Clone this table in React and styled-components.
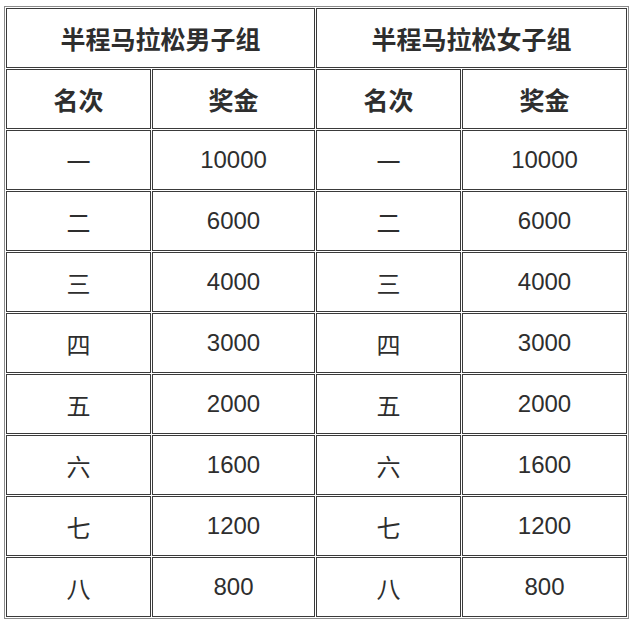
import styled, { createGlobalStyle } from 'styled-components';

const GlobalStyle = createGlobalStyle`
  html, body {
    margin: 0;
    padding: 0;
    background: #ffffff;
  }
`;

const Page = styled.div`
  padding: 6px 0 0 4px;
`;

const Table = styled.table`
  border-collapse: separate;
  border-spacing: 1px;
  border: 1px solid #8c8c8c;
  table-layout: fixed;
  width: 625px;
  font-family: "Liberation Sans", "Noto Sans CJK SC", Arial, sans-serif;
  color: #2e2e2e;
`;

const Cell = styled.td`
  box-sizing: border-box;
  height: 60px;
  padding: 0;
  border: 1px solid #3a3a3a;
  text-align: center;
  vertical-align: middle;
  font-size: ${({ head }) => (head ? '25px' : '24px')};
  font-weight: ${({ head }) => (head ? 700 : 400)};
  font-family: ${({ cjk }) =>
    cjk
      ? '"Noto Sans CJK SC", sans-serif'
      : '"Liberation Sans", "Noto Sans CJK SC", Arial, sans-serif'};
`;

const prizes = [
  ['一', '10000'],
  ['二', '6000'],
  ['三', '4000'],
  ['四', '3000'],
  ['五', '2000'],
  ['六', '1600'],
  ['七', '1200'],
  ['八', '800'],
];

export default function App() {
  return (
    <>
      <GlobalStyle />
      <Page>
        <Table>
          <colgroup>
            <col style={{ width: 145 }} />
            <col style={{ width: 163 }} />
            <col style={{ width: 145 }} />
            <col style={{ width: 165 }} />
          </colgroup>
          <tbody>
            <tr>
              <Cell head cjk colSpan={2}>半程马拉松男子组</Cell>
              <Cell head cjk colSpan={2}>半程马拉松女子组</Cell>
            </tr>
            <tr>
              <Cell head cjk>名次</Cell>
              <Cell head cjk>奖金</Cell>
              <Cell head cjk>名次</Cell>
              <Cell head cjk>奖金</Cell>
            </tr>
            {prizes.map(([rank, money]) => (
              <tr key={rank}>
                <Cell cjk>{rank}</Cell>
                <Cell>{money}</Cell>
                <Cell cjk>{rank}</Cell>
                <Cell>{money}</Cell>
              </tr>
            ))}
          </tbody>
        </Table>
      </Page>
    </>
  );
}
